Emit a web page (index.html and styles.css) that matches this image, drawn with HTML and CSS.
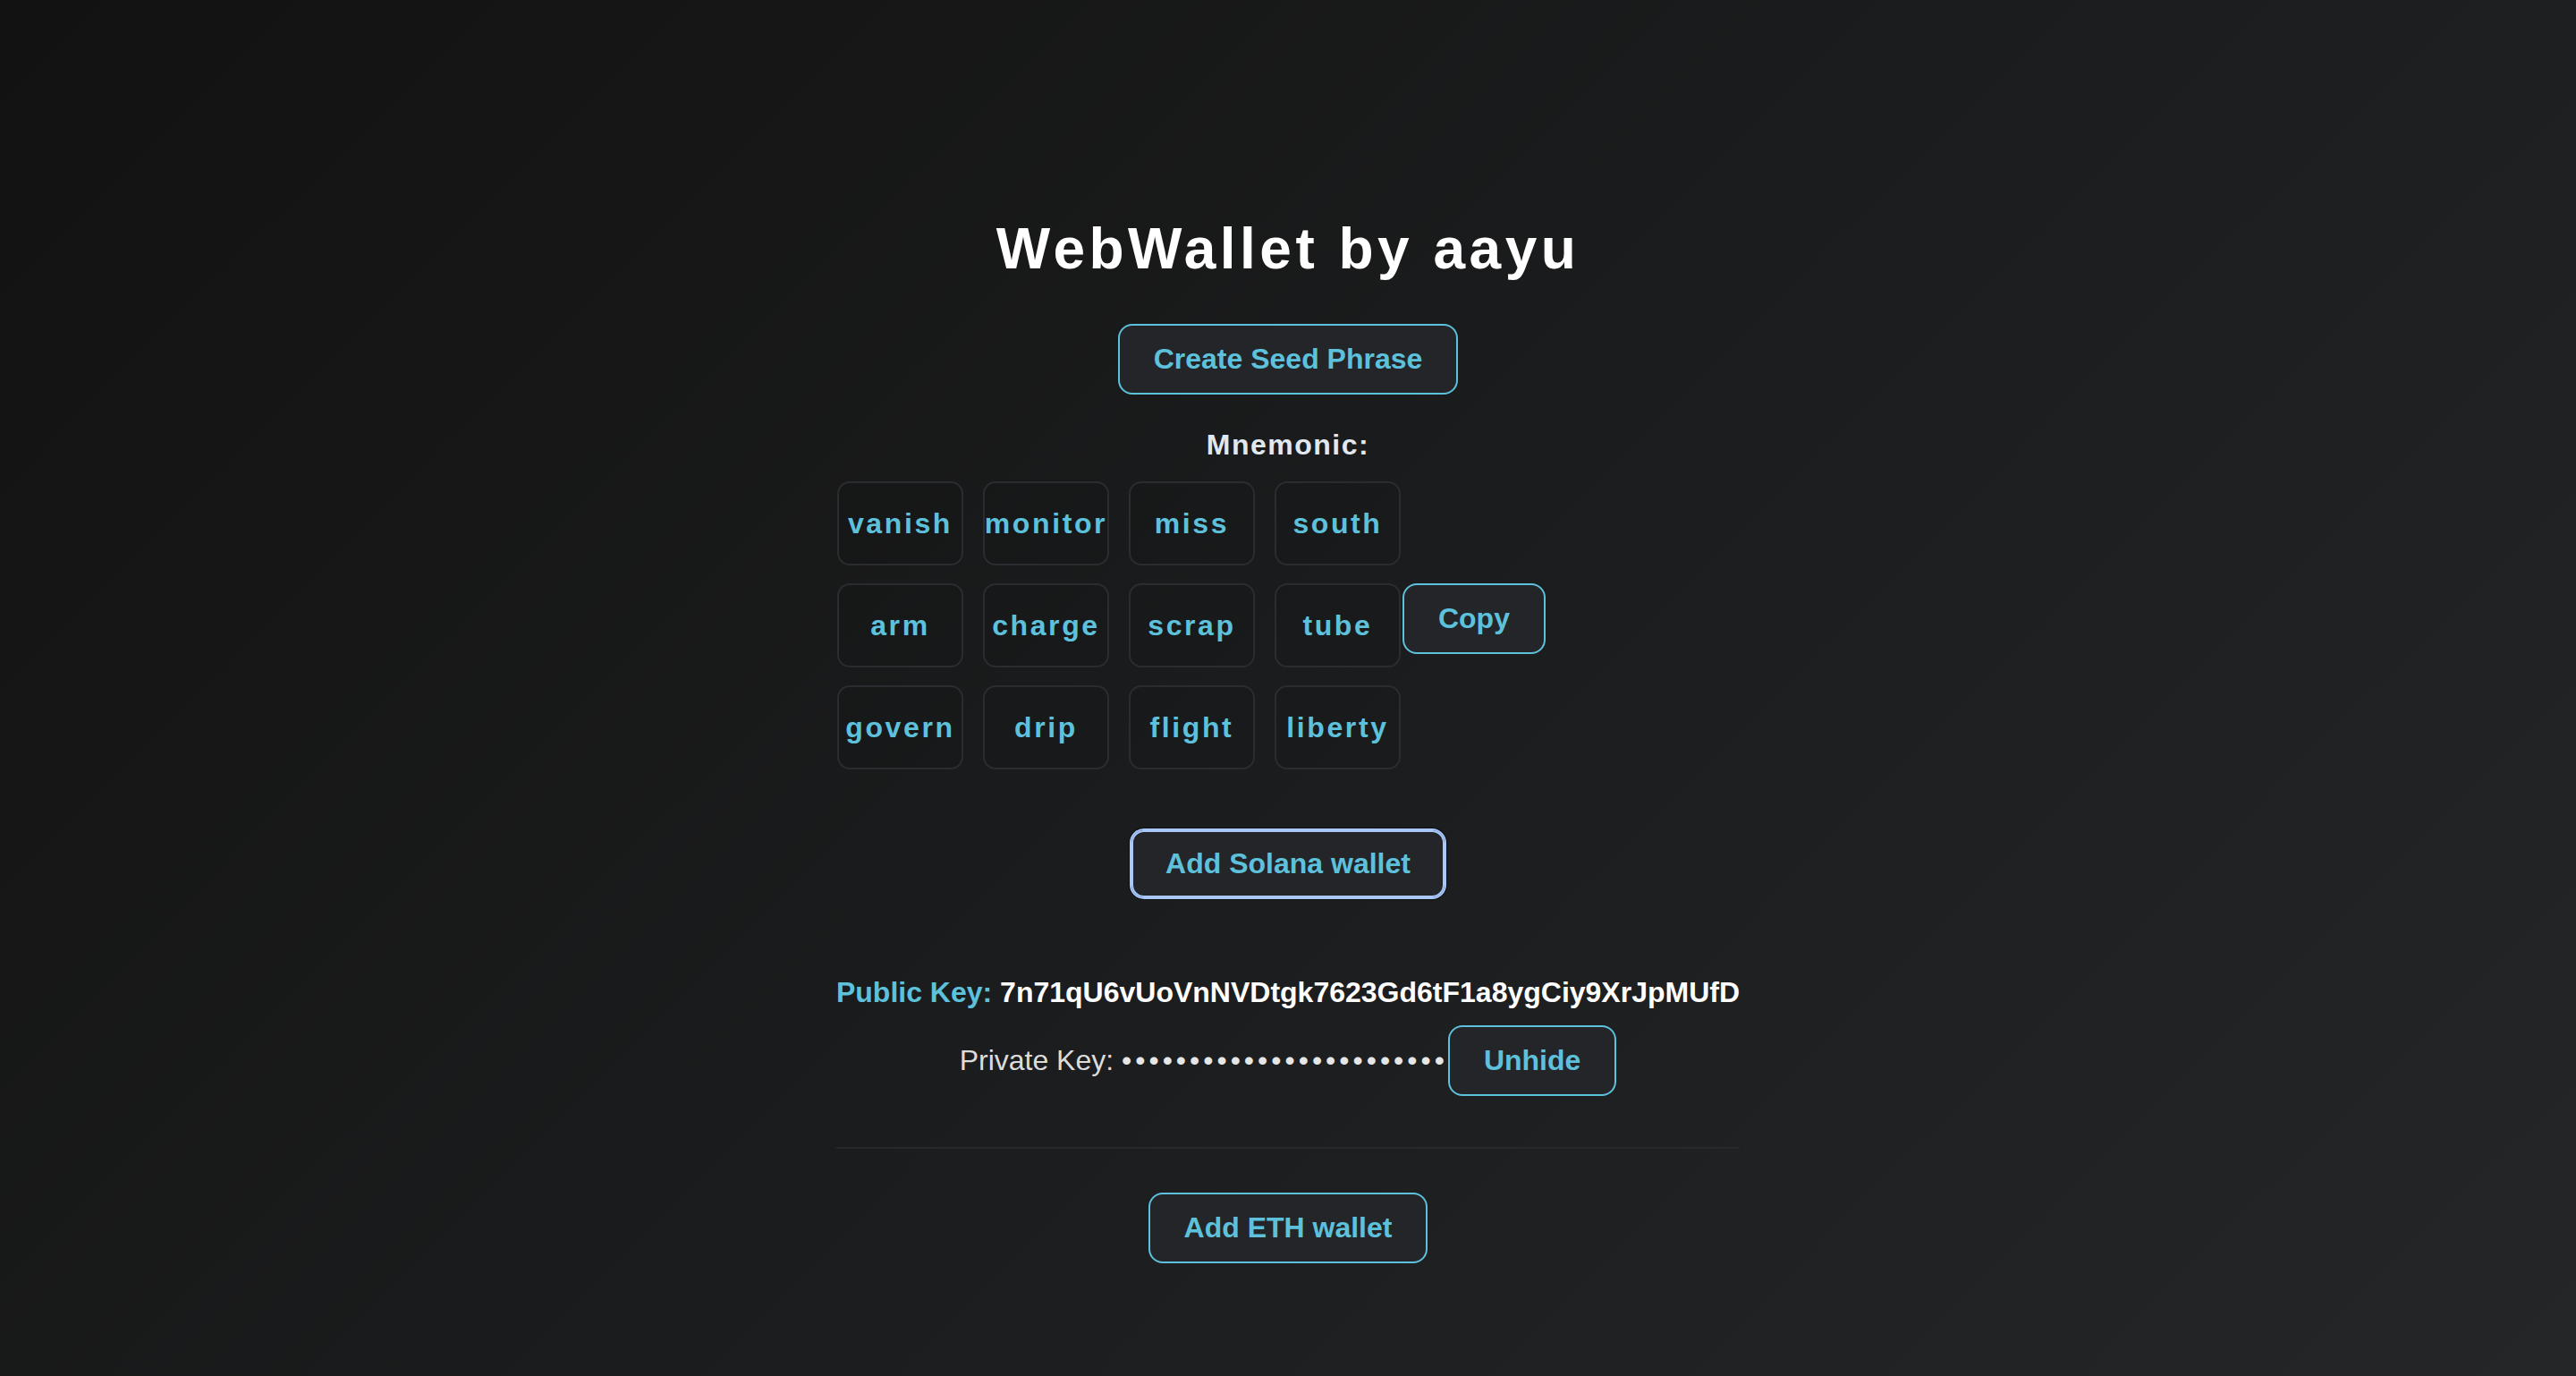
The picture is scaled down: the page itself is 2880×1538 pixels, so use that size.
FILE: index.html
```html
<!DOCTYPE html>
<html lang="en">
<head>
<meta charset="utf-8">
<title>WebWallet by aayu</title>
<link rel="stylesheet" href="styles.css">
</head>
<body>
<div class="app">
  <h1 class="title">WebWallet by aayu</h1>
  <button class="btn btn-create">Create Seed Phrase</button>
  <div class="mnemonic">
    <h3 class="mnemonic-label">Mnemonic:</h3>
    <div class="mnemonic-body">
      <div class="words">
        <div class="word">vanish</div>
        <div class="word">monitor</div>
        <div class="word">miss</div>
        <div class="word">south</div>
        <div class="word">arm</div>
        <div class="word">charge</div>
        <div class="word">scrap</div>
        <div class="word">tube</div>
        <div class="word">govern</div>
        <div class="word">drip</div>
        <div class="word">flight</div>
        <div class="word">liberty</div>
      </div>
      <button class="btn btn-copy">Copy</button>
    </div>
  </div>
  <button class="btn btn-focus btn-solana">Add Solana wallet</button>
  <div class="wallet">
    <p class="pubkey"><span class="pubkey-label">Public Key:</span> 7n71qU6vUoVnNVDtgk7623Gd6tF1a8ygCiy9XrJpMUfD</p>
    <p class="privkey"><span class="privkey-label">Private Key: </span><span class="dots">••••••••••••••••••••••••</span><button class="btn">Unhide</button></p>
  </div>
  <hr class="sep">
  <button class="btn btn-eth">Add ETH wallet</button>
</div>
</body>
</html>
```
FILE: styles.css
```css
* { box-sizing: border-box; }

html, body {
  margin: 0;
  padding: 0;
}

body {
  min-height: 100vh;
  background: linear-gradient(135deg, #121212 0%, #242628 100%);
  font-family: "Liberation Sans", Arial, sans-serif;
  color: #ffffff;
}

.app {
  width: fit-content;
  margin: 0 auto;
  padding-top: 241px;
  display: flex;
  flex-direction: column;
  align-items: center;
}

.title {
  margin: 0;
  font-size: 64px;
  line-height: 74px;
  font-weight: 700;
  letter-spacing: 4.5px;
  color: #ffffff;
}

.btn {
  font-family: "Liberation Sans", Arial, sans-serif;
  font-size: 32px;
  line-height: 37px;
  font-weight: 700;
  color: #5ec1dc;
  background: #232528;
  border: 2px solid #5ec1dc;
  border-radius: 16px;
  padding: 19px 38px;
  cursor: pointer;
}

.btn-create { margin-top: 47px; }

.mnemonic {
  align-self: stretch;
  display: flex;
  flex-direction: column;
  align-items: center;
  margin-top: 38px;
}

.mnemonic-label {
  margin: 0;
  font-size: 32px;
  line-height: 37px;
  font-weight: 700;
  letter-spacing: 1.5px;
  color: #e2e8f0;
}

.mnemonic-body {
  align-self: stretch;
  display: flex;
  align-items: flex-start;
  margin-top: 22px;
  padding-left: 1px;
}

.words {
  display: grid;
  grid-template-columns: repeat(4, 141px);
  grid-auto-rows: 94px;
  column-gap: 22px;
  row-gap: 20px;
}

.word {
  display: flex;
  align-items: center;
  justify-content: center;
  border: 2px solid #2a2c2f;
  border-radius: 14px;
  background: rgba(0, 0, 0, 0.06);
  font-size: 32px;
  font-weight: 700;
  letter-spacing: 2.6px;
  color: #5ec1dc;
  white-space: nowrap;
}

.btn-copy {
  margin-left: 2px;
  margin-top: 114px;
}

.btn-solana { margin-top: 66px; }

.btn-focus {
  border-color: #a8c7fa;
  box-shadow: inset 0 0 0 2px #a8c7fa, 0 0 0 1px #0f1011;
}

.wallet {
  align-self: stretch;
  margin-top: 86px;
  text-align: center;
}

.pubkey {
  margin: 0;
  font-size: 32px;
  line-height: 37px;
  font-weight: 700;
  color: #ffffff;
  white-space: nowrap;
}

.pubkey-label { color: #5ec1dc; }

.privkey {
  margin: 18px 0 0;
  font-size: 32px;
  line-height: 37px;
  color: #dcdcdc;
  white-space: nowrap;
}

.privkey-label { white-space: pre; }

.dots {
  letter-spacing: 4px;
  color: #e6e6e6;
}

.sep {
  align-self: stretch;
  margin: 57px 0 0;
  border: 0;
  height: 2px;
  background: #28292b;
}

.btn-eth { margin-top: 49px; }
```
